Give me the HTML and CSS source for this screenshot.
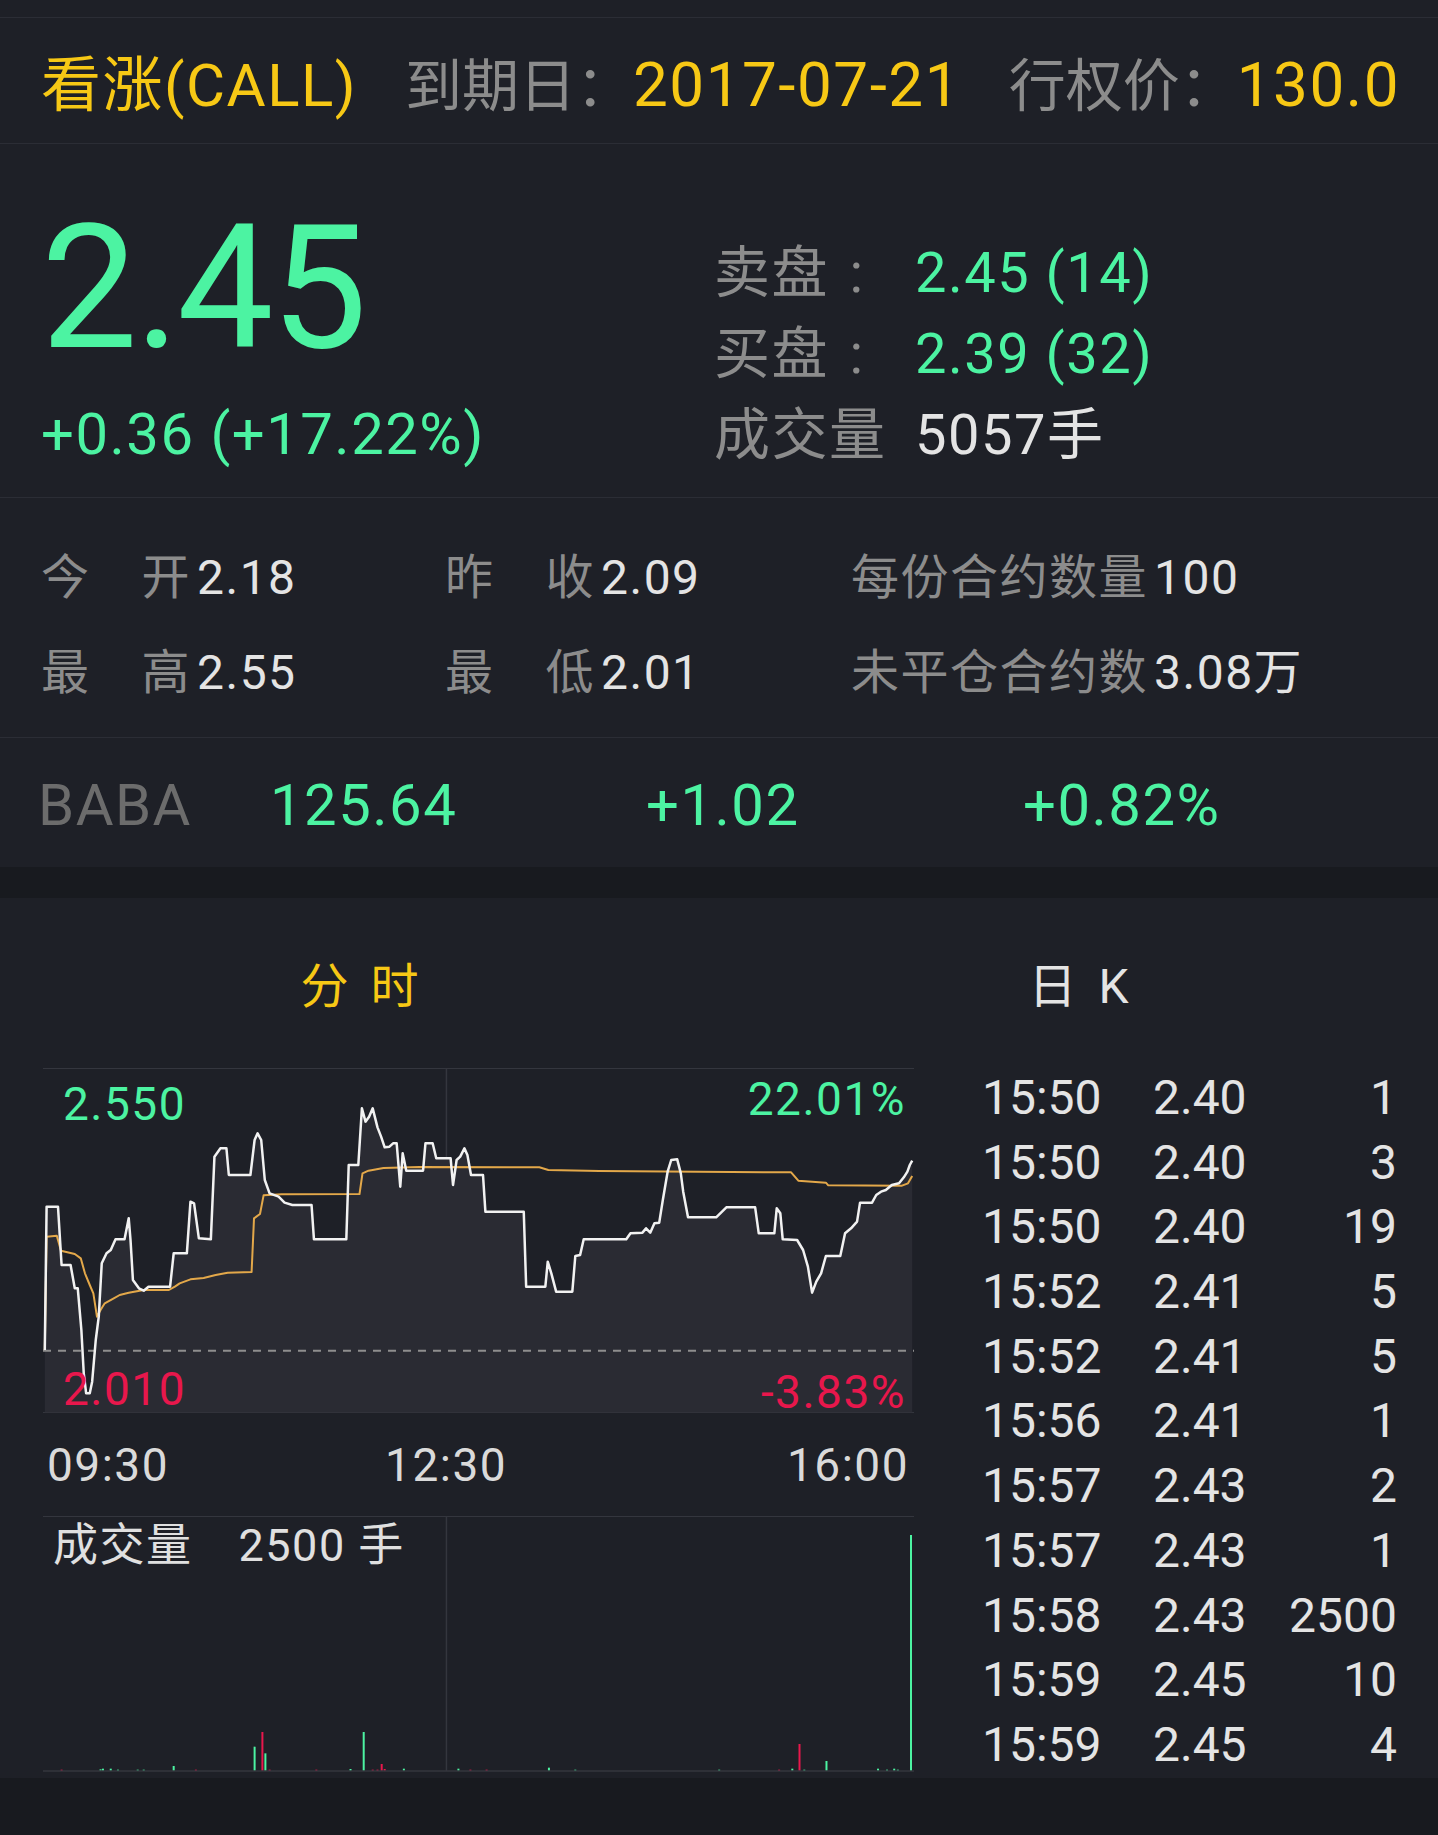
FILE: index.html
```html
<!DOCTYPE html>
<html>
<head>
  <meta charset="utf-8">
  <title>BABA 看涨期权</title>
  <link rel="stylesheet" href="styles.css">
</head>
<body>
  <div class="status-bar"></div>

  <div class="contract-head">
    <span class="gold">看涨(CALL)</span>
    <span><span class="muted cjk">到期日：</span><span class="gold num">2017-07-21</span></span>
    <span><span class="muted cjk">行权价：</span><span class="gold num">130.0</span></span>
  </div>

  <div class="quote">
    <div class="quote-main">
      <div class="last-price">2.45</div>
      <div class="change">+0.36 (+17.22%)</div>
    </div>
    <div class="quote-book">
      <span class="muted">卖盘<i class="colon">:</i></span><span class="up">2.45 (14)</span>
      <span class="muted">买盘<i class="colon">:</i></span><span class="up">2.39 (32)</span>
      <span class="muted">成交量</span><span>5057手</span>
    </div>
  </div>

  <div class="stats">
    <div><span class="pair"><i>今</i><i>开</i></span><b>2.18</b></div>
    <div><span class="pair"><i>昨</i><i>收</i></span><b>2.09</b></div>
    <div><span class="muted">每份合约数量</span><b>100</b></div>
    <div><span class="pair"><i>最</i><i>高</i></span><b>2.55</b></div>
    <div><span class="pair"><i>最</i><i>低</i></span><b>2.01</b></div>
    <div><span class="muted">未平仓合约数</span><b>3.08万</b></div>
  </div>

  <div class="underlying">
    <span class="symbol">BABA</span>
    <span class="up">125.64</span>
    <span class="up">+1.02</span>
    <span class="up">+0.82%</span>
  </div>

  <div class="band"></div>

  <div class="tabs">
    <div class="tab active">分 时</div>
    <div class="tab">日 K</div>
  </div>

  <div class="board">
    <div class="chart-col">
      <div class="price-chart">
        <svg width="871" height="345" viewBox="72 84 1453 1035" preserveAspectRatio="none">
          <line class="grid" x1="72" y1="85" x2="1525" y2="85"/>
          <line class="grid" x1="72" y1="1118" x2="1525" y2="1118"/>
          <line class="grid" x1="745" y1="85" x2="745" y2="1118"/>
          <path class="area" d="M75,930 L78,500 L97,500 L103,675 L118,675 L125,745 L130,745 L136,870 L140,1000 L144,1060 L150,1060 L154,1025 L160,900 L165,830 L170,670 L178,640 L185,630 L193,598 L208,598 L215,535 L218,600 L222,720 L232,745 L240,752 L248,740 L284,740 L290,640 L312,640 L318,485 L324,490 L332,595 L352,598 L358,350 L368,325 L378,325 L382,405 L418,405 L425,300 L430,280 L436,300 L442,420 L450,460 L465,470 L475,488 L488,495 L520,495 L524,598 L578,598 L582,375 L598,375 L604,205 L610,245 L616,230 L622,205 L630,262 L636,290 L642,322 L650,320 L656,310 L662,310 L668,440 L672,340 L678,392 L706,392 L710,310 L722,310 L728,355 L752,355 L756,435 L762,360 L768,350 L775,325 L780,345 L786,405 L806,405 L810,515 L874,515 L878,740 L910,740 L914,665 L920,700 L928,755 L955,755 L960,648 L968,645 L974,598 L1045,598 L1052,580 L1072,578 L1078,565 L1085,578 L1092,550 L1100,548 L1106,480 L1114,395 L1120,360 L1130,358 L1136,400 L1140,455 L1148,532 L1195,532 L1212,502 L1260,502 L1266,580 L1292,580 L1296,505 L1302,520 L1306,598 L1330,600 L1340,630 L1348,680 L1355,758 L1362,725 L1370,700 L1378,648 L1402,648 L1410,580 L1420,565 L1430,545 L1435,488 L1455,488 L1462,465 L1470,455 L1478,450 L1488,435 L1500,430 L1508,412 L1514,395 L1518,375 L1522,362 L1522,1117 L75,1117 Z"/>
          <line class="prev-close" x1="72" y1="932" x2="1525" y2="932"/>
          <path class="avg-line" d="M75,930 L78,590 L95,587 L102,632 L125,642 L135,655 L142,700 L150,735 L156,760 L162,830 L168,810 L175,790 L190,775 L200,765 L215,758 L240,750 L282,750 L292,740 L300,730 L318,718 L340,714 L360,705 L380,698 L420,696 L424,535 L434,522 L440,466 L470,463 L600,462 L605,400 L615,392 L640,384 L700,381 L900,382 L915,390 L1000,393 L1320,397 L1332,422 L1378,428 L1382,436 L1505,437 L1515,430 L1522,408"/>
          <path class="price-line" d="M75,930 L78,500 L97,500 L103,675 L118,675 L125,745 L130,745 L136,870 L140,1000 L144,1060 L150,1060 L154,1025 L160,900 L165,830 L170,670 L178,640 L185,630 L193,598 L208,598 L215,535 L218,600 L222,720 L232,745 L240,752 L248,740 L284,740 L290,640 L312,640 L318,485 L324,490 L332,595 L352,598 L358,350 L368,325 L378,325 L382,405 L418,405 L425,300 L430,280 L436,300 L442,420 L450,460 L465,470 L475,488 L488,495 L520,495 L524,598 L578,598 L582,375 L598,375 L604,205 L610,245 L616,230 L622,205 L630,262 L636,290 L642,322 L650,320 L656,310 L662,310 L668,440 L672,340 L678,392 L706,392 L710,310 L722,310 L728,355 L752,355 L756,435 L762,360 L768,350 L775,325 L780,345 L786,405 L806,405 L810,515 L874,515 L878,740 L910,740 L914,665 L920,700 L928,755 L955,755 L960,648 L968,645 L974,598 L1045,598 L1052,580 L1072,578 L1078,565 L1085,578 L1092,550 L1100,548 L1106,480 L1114,395 L1120,360 L1130,358 L1136,400 L1140,455 L1148,532 L1195,532 L1212,502 L1260,502 L1266,580 L1292,580 L1296,505 L1302,520 L1306,598 L1330,600 L1340,630 L1348,680 L1355,758 L1362,725 L1370,700 L1378,648 L1402,648 L1410,580 L1420,565 L1430,545 L1435,488 L1455,488 L1462,465 L1470,455 L1478,450 L1488,435 L1500,430 L1508,412 L1514,395 L1518,375 L1522,362"/>
        </svg>
        <span class="axis-label up hi-price">2.550</span>
        <span class="axis-label up hi-pct">22.01%</span>
        <span class="axis-label down lo-price">2.010</span>
        <span class="axis-label down lo-pct">-3.83%</span>
      </div>

      <div class="time-axis">
        <span>09:30</span>
        <span class="mid">12:30</span>
        <span class="end">16:00</span>
      </div>

      <div class="volume-chart">
        <svg width="871" height="256" viewBox="72 78 1453 768" preserveAspectRatio="none">
          <line class="grid" x1="72" y1="79" x2="1525" y2="79"/>
          <line class="grid" x1="745" y1="79" x2="745" y2="843"/>
          <g class="bar-up">
            <line x1="1520" y1="135" x2="1520" y2="843"/>
            <line x1="425" y1="770" x2="425" y2="843"/>
            <line x1="443" y1="790" x2="443" y2="843"/>
            <line x1="607" y1="726" x2="607" y2="843"/>
            <line x1="1379" y1="813" x2="1379" y2="843"/>
            <line x1="290" y1="828" x2="290" y2="843"/>
            <line x1="168" y1="838" x2="168" y2="843"/>
            <line x1="172" y1="836" x2="172" y2="843"/>
            <line x1="185" y1="836" x2="185" y2="843"/>
            <line x1="197" y1="839" x2="197" y2="843"/>
            <line x1="230" y1="839" x2="230" y2="843"/>
            <line x1="240" y1="839" x2="240" y2="843"/>
            <line x1="585" y1="837" x2="585" y2="843"/>
            <line x1="674" y1="836" x2="674" y2="843"/>
            <line x1="765" y1="836" x2="765" y2="843"/>
            <line x1="916" y1="833" x2="916" y2="843"/>
            <line x1="960" y1="839" x2="960" y2="843"/>
            <line x1="1200" y1="839" x2="1200" y2="843"/>
            <line x1="1322" y1="836" x2="1322" y2="843"/>
            <line x1="1342" y1="839" x2="1342" y2="843"/>
            <line x1="1465" y1="836" x2="1465" y2="843"/>
            <line x1="1480" y1="839" x2="1480" y2="843"/>
            <line x1="1492" y1="836" x2="1492" y2="843"/>
            <line x1="1498" y1="839" x2="1498" y2="843"/>
          </g>
          <g class="bar-down">
            <line x1="438" y1="726" x2="438" y2="843"/>
            <line x1="637" y1="822" x2="637" y2="843"/>
            <line x1="1334" y1="762" x2="1334" y2="843"/>
            <line x1="103" y1="839" x2="103" y2="843"/>
            <line x1="327" y1="839" x2="327" y2="843"/>
            <line x1="450" y1="839" x2="450" y2="843"/>
            <line x1="528" y1="839" x2="528" y2="843"/>
            <line x1="622" y1="839" x2="622" y2="843"/>
            <line x1="630" y1="839" x2="630" y2="843"/>
            <line x1="642" y1="837" x2="642" y2="843"/>
            <line x1="785" y1="839" x2="785" y2="843"/>
            <line x1="812" y1="839" x2="812" y2="843"/>
            <line x1="1300" y1="839" x2="1300" y2="843"/>
          </g>
          <line class="grid" x1="72" y1="843" x2="1525" y2="843"/>
        </svg>
        <div class="volume-caption">成交量<span>2500 手</span></div>
      </div>
    </div>

    <div class="ticks">
      <div class="tick"><span>15:50</span><span>2.40</span><span>1</span></div>
      <div class="tick"><span>15:50</span><span>2.40</span><span>3</span></div>
      <div class="tick"><span>15:50</span><span>2.40</span><span>19</span></div>
      <div class="tick"><span>15:52</span><span>2.41</span><span>5</span></div>
      <div class="tick"><span>15:52</span><span>2.41</span><span>5</span></div>
      <div class="tick"><span>15:56</span><span>2.41</span><span>1</span></div>
      <div class="tick"><span>15:57</span><span>2.43</span><span>2</span></div>
      <div class="tick"><span>15:57</span><span>2.43</span><span>1</span></div>
      <div class="tick"><span>15:58</span><span>2.43</span><span>2500</span></div>
      <div class="tick"><span>15:59</span><span>2.45</span><span>10</span></div>
      <div class="tick"><span>15:59</span><span>2.45</span><span>4</span></div>
    </div>
  </div>

  <div class="band footer"></div>
</body>
</html>
```

FILE: styles.css
```css
* {
  box-sizing: border-box;
}

body {
  margin: 0;
  width: 1438px;
  background-color: #1e2027;
  color: #e4e4e4;
  font-family: Roboto, "Noto Sans CJK SC", sans-serif;
  letter-spacing: 1.5px;
}

i {
  font-style: normal;
}

.gold {
  color: #f7c815;
}

.muted {
  color: #8c8c8c;
}

.up {
  color: #4cf3a2;
}

.down {
  color: #e8174c;
}

.colon {
  display: inline-block;
  width: 1em;
  text-align: center;
}

.status-bar {
  height: 18px;
  border-bottom: 1px solid #2b2d35;
}

/* contract title */
.contract-head {
  display: flex;
  justify-content: space-between;
  align-items: baseline;
  height: 126px;
  padding: 36px 38px 0 41px;
  border-bottom: 1px solid #2b2d35;
  font-size: 60px;
  line-height: 1;
}

.contract-head .cjk {
  font-size: 57px;
  letter-spacing: 0;
}

.contract-head .num {
  font-size: 62px;
}

/* last price + order book */
.quote {
  display: flex;
  height: 354px;
  padding-left: 41px;
  border-bottom: 1px solid #2b2d35;
}

.quote-main {
  width: 673px;
  padding-top: 58px;
  color: #4cf3a2;
}

.last-price {
  font-size: 172px;
  line-height: 1;
  letter-spacing: -3px;
}

.change {
  margin-top: 31px;
  font-size: 58px;
  line-height: 1;
}

.quote-book {
  display: grid;
  grid-template-columns: 201px auto;
  align-content: start;
  padding-top: 89px;
  font-size: 56px;
  line-height: 81px;
}

/* day stats */
.stats {
  display: grid;
  grid-template-columns: 404px 406px auto;
  grid-auto-rows: 95px;
  align-content: start;
  height: 240px;
  padding: 32px 0 0 41px;
  border-bottom: 1px solid #2b2d35;
  font-size: 48px;
  line-height: 95px;
}

.stats div {
  display: flex;
}

.stats .pair {
  display: flex;
  justify-content: space-between;
  width: 150px;
  color: #8c8c8c;
}

.stats b {
  margin-left: 6px;
  font-weight: normal;
  color: #e4e4e4;
}

.underlying {
  display: grid;
  grid-template-columns: 232px 376px 377px auto;
  height: 129px;
  padding: 6px 0 0 38px;
  font-size: 58px;
  line-height: 123px;
}

.underlying .symbol {
  color: #6c6c6c;
}

.band {
  height: 31px;
  background-color: #181a1f;
}

.footer {
  height: 57px;
}

/* chart tabs */
.tabs {
  display: flex;
  height: 168px;
  letter-spacing: 0;
}

.tab {
  flex: 1;
  display: flex;
  align-items: center;
  justify-content: center;
  font-size: 48px;
  word-spacing: 10px;
  color: #e4e4e4;
}

.tab.active {
  color: #f7c815;
}

.board {
  display: flex;
  height: 712px;
}

.chart-col {
  width: 914px;
  padding-left: 43px;
}

.chart-col svg {
  display: block;
}

.grid {
  stroke: #34363e;
  stroke-width: 1.5;
  vector-effect: non-scaling-stroke;
}

.area {
  fill: #2a2b33;
}

.prev-close {
  stroke: #8e8e8e;
  stroke-width: 2;
  stroke-dasharray: 8 7;
  vector-effect: non-scaling-stroke;
}

.avg-line {
  fill: none;
  stroke: #e3a84a;
  stroke-width: 2;
  stroke-linejoin: round;
  vector-effect: non-scaling-stroke;
}

.price-line {
  fill: none;
  stroke: #f2f2f2;
  stroke-width: 2.5;
  stroke-linejoin: round;
  vector-effect: non-scaling-stroke;
}

.price-chart {
  position: relative;
  height: 345px;
  margin-top: 2px;
}

.axis-label {
  position: absolute;
  font-size: 46px;
  line-height: 1;
}

.hi-price {
  left: 20px;
  top: 13px;
}

.hi-pct {
  right: 8px;
  top: 8px;
}

.lo-price {
  left: 20px;
  top: 298px;
}

.lo-pct {
  right: 8px;
  top: 301px;
}

.time-axis {
  display: flex;
  align-items: center;
  height: 103px;
  padding: 0 5px 0 4px;
  font-size: 46px;
  color: #dadada;
}

.time-axis .mid {
  margin-left: 216px;
}

.time-axis .end {
  margin-left: auto;
}

.volume-chart {
  position: relative;
  height: 256px;
}

.bar-up line,
.bar-down line {
  stroke-width: 2;
  vector-effect: non-scaling-stroke;
}

.bar-up line {
  stroke: #4cf3a2;
}

.bar-down line {
  stroke: #e8174c;
}

.volume-caption {
  position: absolute;
  left: 10px;
  top: 7px;
  font-size: 45px;
  line-height: 1;
  color: #e0e0e0;
}

.volume-caption span {
  margin-left: 46px;
}

/* trade ticks */
.ticks {
  flex: 1;
  padding: 0 41px 0 68px;
  letter-spacing: 0;
}

.tick {
  display: grid;
  grid-template-columns: 171px 1fr auto;
  height: 64.7px;
  font-size: 48px;
  line-height: 64.7px;
  color: #e4e4e4;
}
```
